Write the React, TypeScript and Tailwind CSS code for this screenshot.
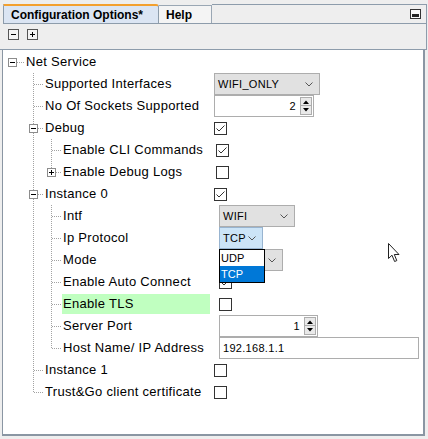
import React from 'react';

type Exp = { x: number; sign: '+' | '-' };
type RowDef = {
  label: string;
  level: 0 | 1 | 2;
  v33?: 'full' | 'top';
  v51?: 'full' | 'top';
  exp?: Exp;
  h: [number, number];
  value?: React.ReactNode;
  vm?: 4 | 6 | 9;
  hl?: boolean;
};

const LINE = '#a3a3a3';
// content of the tree starts at x = 3 (panel margin 2 + border 1)
const L1X = 30.5;
const L2X = 48.5;

function Guides({ r }: { r: RowDef }) {
  const vs: React.ReactNode[] = [];
  if (r.v33) vs.push(<line key="a" x1={L1X} y1={0} x2={L1X} y2={r.v33 === 'full' ? 22 : 11} stroke={LINE} strokeDasharray="1 1" />);
  if (r.v51) vs.push(<line key="b" x1={L2X} y1={0} x2={L2X} y2={r.v51 === 'full' ? 22 : 11} stroke={LINE} strokeDasharray="1 1" />);
  return (
    <svg width="70" height="22" className="absolute left-0 top-0" shapeRendering="crispEdges">
      {vs}
      <line x1={r.h[0]} y1={11.5} x2={r.h[1]} y2={11.5} stroke={LINE} strokeDasharray="1 1" />
      {r.exp && (
        <g>
          <rect x={r.exp.x + 0.5} y={7.5} width={8} height={8} fill="#fff" stroke="#8c8c8c" />
          <line x1={r.exp.x + 2} y1={11.5} x2={r.exp.x + 7} y2={11.5} stroke="#000" />
          {r.exp.sign === '+' && <line x1={r.exp.x + 4.5} y1={9} x2={r.exp.x + 4.5} y2={14} stroke="#000" />}
        </g>
      )}
    </svg>
  );
}

function Chevron() {
  return (
    <svg width="8" height="5" viewBox="0 0 8 5">
      <polyline points="0.5,0.5 4,4 7.5,0.5" fill="none" stroke="#555" strokeWidth="1" />
    </svg>
  );
}

function Select({ w, text, open }: { w: string; text: string; open?: boolean }) {
  return (
    <div
      className={
        'flex h-[22px] items-center justify-between border pl-[3px] pr-[6px] text-[11px] text-black ' +
        w +
        (open ? ' border-[#98b4d0] bg-[#cce4f7]' : ' border-[#adadad] bg-[#e1e1e1]')
      }
    >
      <span>{text}</span>
      <Chevron />
    </div>
  );
}

function Tri({ up }: { up?: boolean }) {
  return (
    <svg width="6" height="4" viewBox="0 0 6 4">
      <polygon points={up ? '0,4 3,0.5 6,4' : '0,0 3,3.5 6,0'} fill="#000" />
    </svg>
  );
}

function Spinner({ w, value }: { w: string; value: string }) {
  return (
    <div className={'flex h-[22px] items-center border border-[#adadad] bg-white pr-[1px] text-[11px] ' + w}>
      <span className="flex-1 pr-[4px] text-right">{value}</span>
      <div className="flex flex-col">
        <div className="flex h-[9px] w-[12px] items-center justify-center border border-[#adadad] bg-[#e9e9e9]">
          <Tri up />
        </div>
        <div className="flex h-[9px] w-[12px] items-center justify-center border border-t-0 border-[#adadad] bg-[#e9e9e9]">
          <Tri />
        </div>
      </div>
    </div>
  );
}

function TextField({ w, value }: { w: string; value: string }) {
  return (
    <div className={'flex h-[22px] items-center border border-[#adadad] bg-white pl-[3px] text-[11px] ' + w}>{value}</div>
  );
}

function Check({ on }: { on?: boolean }) {
  return (
    <div className="h-[13px] w-[13px] border border-[#333] bg-white">
      {on && (
        <svg width="11" height="11" viewBox="0 0 11 11">
          <polyline points="1.5,5.5 4,8 9.5,2.5" fill="none" stroke="#333" strokeWidth="1" />
        </svg>
      )}
    </div>
  );
}

const rows: RowDef[] = [
  { label: 'Net Service', level: 0, exp: { x: 5, sign: '-' }, h: [14, 21] },
  { label: 'Supported Interfaces', level: 1, v33: 'full', h: [31, 40], value: <Select w="w-[106px]" text="WIFI_ONLY" />, vm: 4 },
  { label: 'No Of Sockets Supported', level: 1, v33: 'full', h: [31, 40], value: <Spinner w="w-[100px]" value="2" />, vm: 4 },
  { label: 'Debug', level: 1, v33: 'full', exp: { x: 26, sign: '-' }, h: [35, 40], value: <Check on />, vm: 4 },
  { label: 'Enable CLI Commands', level: 2, v33: 'full', v51: 'full', h: [49, 58], value: <Check on />, vm: 6 },
  { label: 'Enable Debug Logs', level: 2, v33: 'full', v51: 'top', exp: { x: 44, sign: '+' }, h: [53, 58], value: <Check />, vm: 6 },
  { label: 'Instance 0', level: 1, v33: 'full', exp: { x: 26, sign: '-' }, h: [35, 40], value: <Check on />, vm: 4 },
  { label: 'Intf', level: 2, v33: 'full', v51: 'full', h: [49, 58], value: <Select w="w-[76px]" text="WIFI" />, vm: 9 },
  { label: 'Ip Protocol', level: 2, v33: 'full', v51: 'full', h: [49, 58], value: <Select w="w-[44px]" text="TCP" open />, vm: 9 },
  { label: 'Mode', level: 2, v33: 'full', v51: 'full', h: [49, 58], value: <Select w="w-[64px]" text="" />, vm: 9 },
  { label: 'Enable Auto Connect', level: 2, v33: 'full', v51: 'full', h: [49, 58], value: <Check on />, vm: 9 },
  { label: 'Enable TLS', level: 2, v33: 'full', v51: 'full', h: [49, 58], value: <Check />, vm: 9, hl: true },
  { label: 'Server Port', level: 2, v33: 'full', v51: 'full', h: [49, 58], value: <Spinner w="w-[99px]" value="1" />, vm: 9 },
  { label: 'Host Name/ IP Address', level: 2, v33: 'full', v51: 'top', h: [49, 58], value: <TextField w="w-[200px]" value="192.168.1.1" />, vm: 9 },
  { label: 'Instance 1', level: 1, v33: 'full', h: [31, 40], value: <Check />, vm: 4 },
  { label: 'Trust&Go client certificate', level: 1, v33: 'top', h: [31, 40], value: <Check />, vm: 4 },
];

const padCls = ['pl-[22px]', 'pl-[41px]', 'pl-[59px]'];
const vmCls: Record<number, string> = { 4: 'ml-[4px]', 6: 'ml-[6px]', 9: 'ml-[9px]' };

function Row({ r }: { r: RowDef }) {
  return (
    <div className="relative flex h-[22px] items-center">
      <Guides r={r} />
      <div className={'flex h-[22px] w-[207px] shrink-0 items-center ' + padCls[r.level]}>
        <div className={'flex h-[20px] flex-1 items-center whitespace-nowrap pl-[1px] ' + (r.hl ? 'bg-[#c0ffc0]' : '')}>{r.label}</div>
      </div>
      {r.value && <div className={vmCls[r.vm ?? 4]}>{r.value}</div>}
    </div>
  );
}

export default function App() {
  return (
    <div className="relative flex h-[439px] w-[428px] flex-col overflow-hidden bg-[#eeeeee] font-['Liberation_Sans',Arial,sans-serif] text-black">
      {/* tab header */}
      <div className="flex h-[24px] shrink-0 pl-[3px] pr-[1px] pt-[4px]">
        <div className="flex flex-1 border-b border-[#8d9cab]">
          <div className="flex w-[156px] items-center rounded-tr-[3px] border-l border-r border-t-2 border-l-[#8d9cab] border-r-[#8d9cab] border-t-[#f3a02e] bg-[#dbe5f3] pl-[7px] text-[12px] font-bold">
            Configuration Options*
          </div>
          <div className="mt-[1px] flex w-[53px] items-center border-r border-t border-[#9aa7b4] bg-[#f4f4f4] pl-[7px] text-[12px] font-bold">
            Help
          </div>
          <div className="flex flex-1 items-center justify-end border-r border-t border-[#8d9cab] pr-[5px]">
            <div className="flex h-[10px] w-[11px] items-end justify-center border border-[#333] bg-[#f8f8f8] pb-[1px]">
              <div className="h-[3px] w-[7px] bg-[#222]" />
            </div>
          </div>
        </div>
      </div>
      {/* toolbar */}
      <div className="mr-[1px] flex h-[26px] shrink-0 items-start gap-[8px] border-b border-r border-[#8d9cab] pl-[8px] pt-[5px]">
        <div className="flex h-[11px] w-[11px] items-center justify-center border border-[#555] bg-[#f4f4f4]">
          <div className="h-[1px] w-[5px] bg-black" />
        </div>
        <div className="relative flex h-[11px] w-[11px] items-center justify-center border border-[#555] bg-[#f4f4f4]">
          <div className="h-[1px] w-[5px] bg-black" />
          <div className="absolute h-[5px] w-[1px] bg-black" />
        </div>
      </div>
      {/* tree */}
      <div className="mb-[3px] ml-[2px] mr-[3px] flex-1 border-b-2 border-l border-r-2 border-[#8a96a3] bg-white pt-[1px] text-[13px] tracking-[0.3px]">
        {rows.map((r) => (
          <Row key={r.label} r={r} />
        ))}
      </div>

      {/* open combo popup */}
      <div className="absolute left-[219px] top-[249px] w-[46px] border border-black bg-white text-[11px]">
        <div className="flex h-[16px] items-center pl-[1px]">UDP</div>
        <div className="flex h-[16px] items-center bg-[#0078d7] pl-[1px] text-white">TCP</div>
      </div>

      {/* mouse cursor */}
      <svg className="absolute left-[388px] top-[243px]" width="13" height="20" viewBox="0 0 13 20">
        <path d="M0.5,0.5 L0.5,15.5 L4,12.2 L6.6,18.5 L8.8,17.6 L6.3,11.5 L11,11.5 Z" fill="#fff" stroke="#222" strokeWidth="1" />
      </svg>
    </div>
  );
}
